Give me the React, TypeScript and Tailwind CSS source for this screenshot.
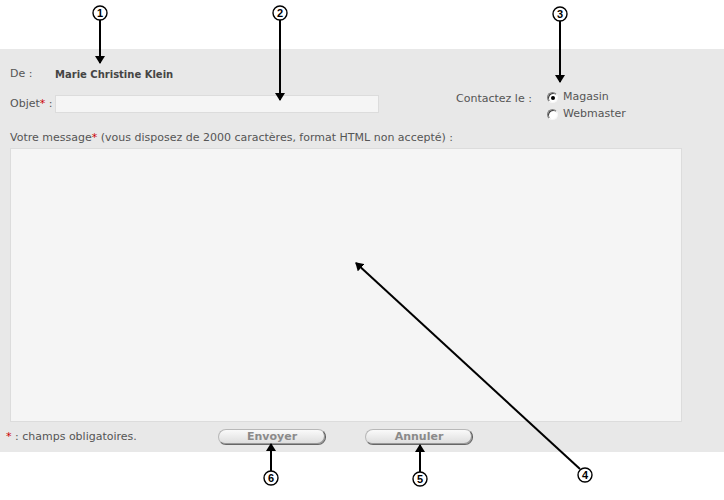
import React from "react";

function Radio({ checked }: { checked?: boolean }) {
  return (
    <span className="relative inline-block h-[11px] w-[11px] rounded-full border border-t-[#808080] border-l-[#808080] border-r-[#f8f8f8] border-b-[#f8f8f8] bg-white shadow-[inset_1px_1px_0_#404040]">
      {checked && (
        <span className="absolute left-[3px] top-[3px] h-[4px] w-[4px] rounded-full bg-black" />
      )}
    </span>
  );
}

function PillButton({ label }: { label: string }) {
  return (
    <button className="h-[16px] w-[108px] rounded-full border border-[#b8b8b8] border-r-[#555] border-b-[#666] bg-[linear-gradient(#fafafa,#dcdcdc)] text-[11px] font-bold leading-[14px] text-[#8a8a8a] shadow-[inset_-1px_-1px_0_#999]">
      {label}
    </button>
  );
}

function Marker({ cx, cy, n }: { cx: number; cy: number; n: string }) {
  return (
    <g>
      <circle cx={cx} cy={cy} r={7} fill="white" stroke="black" strokeWidth={1.4} />
      <text x={cx} y={cy + 4} textAnchor="middle" fontSize="11" fontWeight="bold" fontFamily="Liberation Sans, sans-serif" fill="black">
        {n}
      </text>
    </g>
  );
}

export default function App() {
  return (
    <main className="relative h-[500px] w-[724px] bg-white font-['DejaVu_Sans',sans-serif] text-[11px] text-[#555]">
      <div className="h-[49px]" />
      <section className="h-[403px] bg-[#e8e8e8] px-[10px] pt-[18px]">
        <div className="flex">
          <div className="w-[446px]">
            <div className="flex h-[14px] items-center">
              <span className="w-[45px]">De :</span>
              <span className="text-[10px] font-bold text-[#444]">Marie Christine Klein</span>
            </div>
            <div className="mt-[14px] flex h-[18px] items-center">
              <span className="w-[45px]">
                Objet<span className="text-[#c00]">*</span> :
              </span>
              <input className="h-[18px] w-[324px] border border-[#dcdcdc] bg-[#f5f5f5] outline-none" />
            </div>
          </div>
          <div className="mt-[24px] flex">
            <span className="w-[91px]">Contactez le :</span>
            <div className="flex flex-col gap-[4px]">
              <label className="flex h-[13px] items-center gap-[5px]">
                <Radio checked />
                <span>Magasin</span>
              </label>
              <label className="flex h-[13px] items-center gap-[5px]">
                <Radio />
                <span>Webmaster</span>
              </label>
            </div>
          </div>
        </div>
        <p className="mt-[10px] h-[14px] leading-[14px]">
          Votre message<span className="text-[#c00]">*</span> (vous disposez de 2000 caractères, format HTML non accepté) :
        </p>
        <textarea className="mt-[3px] block h-[274px] w-[672px] resize-none border border-[#dcdcdc] bg-[#f5f5f5] outline-none" />
        <div className="mt-[7px] flex h-[16px] items-center">
          <span className="-ml-[4px] w-[212px]">
            <span className="text-[#c00]">*</span> : champs obligatoires.
          </span>
          <PillButton label="Envoyer" />
          <span className="w-[39px]" />
          <PillButton label="Annuler" />
        </div>
      </section>
      <svg className="pointer-events-none absolute left-0 top-0" width={724} height={500}>
        <defs>
          <marker id="ah" markerWidth="8" markerHeight="10" refX="7" refY="5" orient="auto" markerUnits="userSpaceOnUse">
            <path d="M0,0 L8,5 L0,10 Z" fill="black" />
          </marker>
        </defs>
        <g stroke="black" strokeWidth={2}>
          <line x1={100} y1={20} x2={100} y2={63} markerEnd="url(#ah)" />
          <line x1={280} y1={20} x2={280} y2={100} markerEnd="url(#ah)" />
          <line x1={560} y1={21} x2={560} y2={82} markerEnd="url(#ah)" />
          <line x1={580} y1={469} x2={356} y2={263} markerEnd="url(#ah)" />
          <line x1={420} y1={472} x2={420} y2={445} markerEnd="url(#ah)" />
          <line x1={271} y1={471} x2={271} y2={444} markerEnd="url(#ah)" />
        </g>
        <Marker cx={100} cy={13} n="1" />
        <Marker cx={280} cy={13} n="2" />
        <Marker cx={560} cy={14} n="3" />
        <Marker cx={585} cy={475} n="4" />
        <Marker cx={420} cy={479} n="5" />
        <Marker cx={271} cy={478} n="6" />
      </svg>
    </main>
  );
}
